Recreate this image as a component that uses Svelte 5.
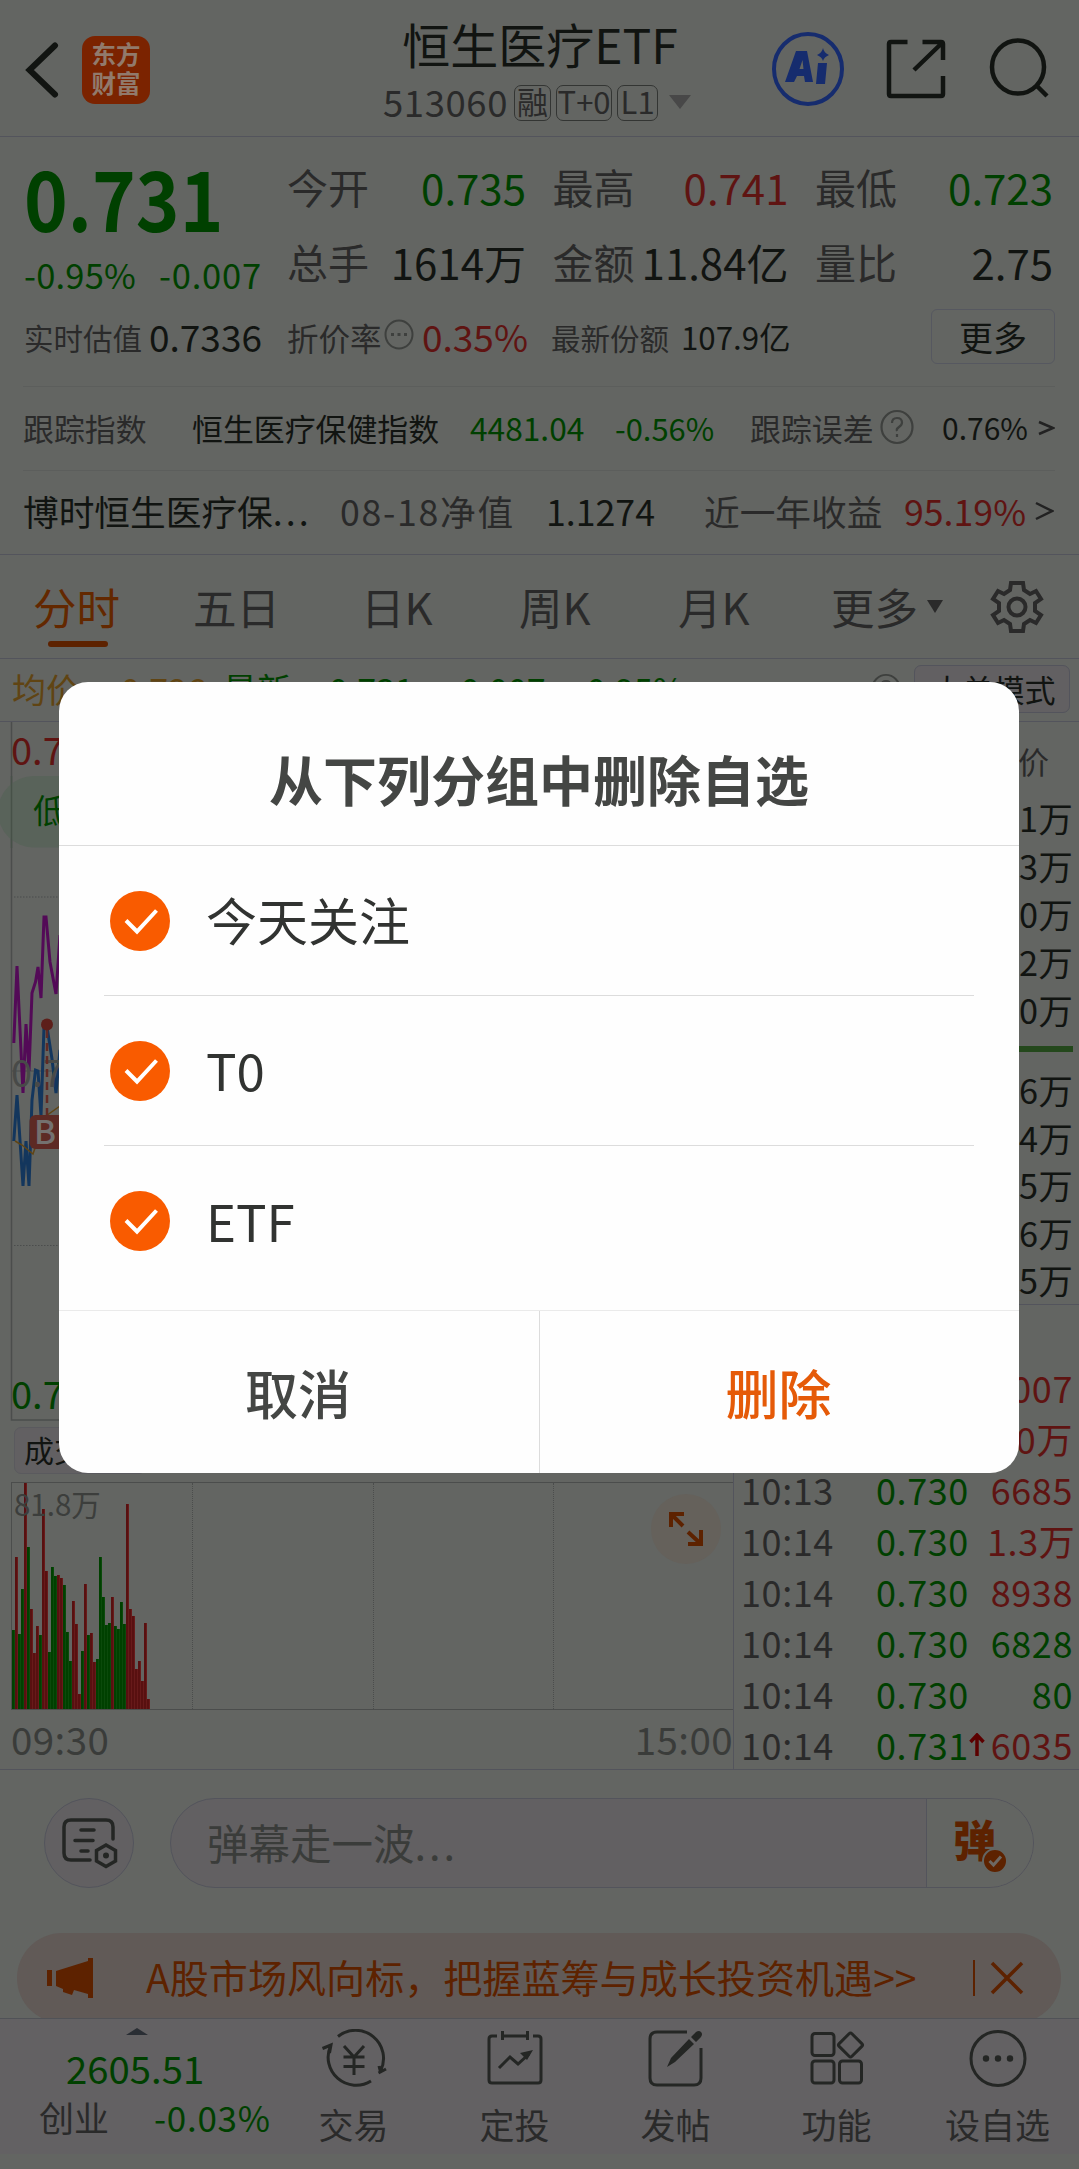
<script>
  const stats = [
    { label: "今开", value: "0.735", tone: "green" },
    { label: "最高", value: "0.741", tone: "red" },
    { label: "最低", value: "0.723", tone: "green" },
    { label: "总手", value: "1614万", tone: "dark" },
    { label: "金额", value: "11.84亿", tone: "dark" },
    { label: "量比", value: "2.75", tone: "dark" },
  ];

  // r / g = up or down minute, number = bar height in px
  const volume =
    "g79 r152 g75 g120 r226 g162 r100 r56 r83 g74 r200 r138 g57 g142 g133 r134 r131 g124 g77 g48 r108 r85 r15 g58 r125 g74 r76 r47 g50 g152 g112 g84 g86 r112 g83 g80 g107 g85 r205 r100 r93 r40 r48 r28 r86 r10"
      .split(" ")
      .map((v) => ({ up: v[0] === "r", h: Number(v.slice(1)) }));

  const asks = ["1万", "3万", "0万", "2万", "0万"];
  const bids = ["6万", "4万", "5万", "6万", "5万"];

  const trades = [
    { time: "", price: "", amount: "007", tone: "red" },
    { time: "", price: "", amount: "0万", tone: "red" },
    { time: "10:13", price: "0.730", amount: "6685", tone: "red" },
    { time: "10:14", price: "0.730", amount: "1.3万", tone: "red" },
    { time: "10:14", price: "0.730", amount: "8938", tone: "red" },
    { time: "10:14", price: "0.730", amount: "6828", tone: "green" },
    { time: "10:14", price: "0.730", amount: "80", tone: "green" },
    { time: "10:14", price: "0.731", amount: "6035", tone: "red", up: true },
  ];

  let groups = [
    { name: "今天关注", checked: true },
    { name: "T0", checked: true },
    { name: "ETF", checked: true },
  ];
</script>

<div class="page">
  <header>
    <div class="head-left">
      <svg class="back" width="34" height="60" viewBox="0 0 34 60">
        <path d="M30 5.500L4.500 30L30 54.500" />
      </svg>
      <div class="logo"><span>东方</span><span>财富</span></div>
    </div>
    <div class="head-title">
      <h1>恒生医疗ETF</h1>
      <div class="code">
        <span class="num">513060</span>
        <i style="width: 37px">融</i>
        <i style="width: 56px">T+0</i>
        <i style="width: 41px">L1</i>
        <svg width="22" height="14" viewBox="0 0 22 14"><path d="M0 0H22L11 14Z" fill="#484848" /></svg>
      </div>
    </div>
    <div class="head-icons">
      <svg width="74" height="76" viewBox="0 0 74 76">
        <ellipse cx="37" cy="38" rx="34" ry="35" fill="none" stroke="#162c6e" stroke-width="4" />
        <path
          d="M25 20H36L42 51H34L33 45H26L23 51H14ZM28.500 38H32.500L31.500 29Z"
          fill="#162c6e"
          fill-rule="evenodd"
        />
        <path d="M47 32H56L54 53H45ZM52 17Q53 22 58 24Q53 26 52 30Q51 26 46 24Q51 22 52 17Z" fill="#162c6e" />
      </svg>
      <svg width="60" height="60" viewBox="0 0 60 60" class="line">
        <path d="M21.500 3H5Q3 3 3 5V55Q3 57 5 57H55Q57 57 57 55V37M36.500 3H55Q57 3 57 5V21M56 4L28 31" />
      </svg>
      <svg width="62" height="62" viewBox="0 0 62 62" class="line">
        <ellipse cx="29" cy="29" rx="26" ry="26.500" />
        <path d="M48 48L58 58" />
      </svg>
    </div>
  </header>

  <section class="quote">
    <div class="last green">
      <strong>0.731</strong>
      <div><span>-0.95%</span><span>-0.007</span></div>
    </div>
    <div class="stats">
      {#each stats as s}
        <div><label>{s.label}</label><b class={s.tone}>{s.value}</b></div>
      {/each}
    </div>
  </section>

  <section class="extra">
    <label>实时估值</label>
    <b class="dark">0.7336</b>
    <label class="wide">折价率</label>
    <svg width="30" height="31" viewBox="0 0 30 31">
      <ellipse cx="15" cy="15.500" rx="13.500" ry="14" fill="none" stroke="#3e403e" stroke-width="2" />
      <path d="M7 15.500h3M13.500 15.500h3M20 15.500h3" stroke="#3e403e" stroke-width="3" />
    </svg>
    <b class="red">0.35%</b>
    <label>最新份额</label>
    <b class="dark small">107.9亿</b>
    <button>更多</button>
  </section>

  <section class="index">
    <label>跟踪指数</label>
    <span class="dark">恒生医疗保健指数</span>
    <span class="green n">4481.04</span>
    <span class="green">-0.56%</span>
    <label>跟踪误差</label>
    <svg width="34" height="36" viewBox="0 0 34 36" class="help">
      <ellipse cx="17" cy="18" rx="15.500" ry="16" />
      <path d="M12 14Q12 9 17 9T22 13.500Q22 16 19 18T17 22M17 25V28" />
    </svg>
    <span class="dark pct">0.76%</span>
    <svg width="17" height="16" viewBox="0 0 17 16" class="more"><path d="M1 2L15 8L1 14" /></svg>
  </section>

  <section class="fund">
    <span class="dark">博时恒生医疗保<em>...</em></span>
    <span class="gray date">08-18净值</span>
    <span class="dark">1.1274</span>
    <span class="gray">近一年收益</span>
    <span class="red">95.19%</span>
    <svg width="19" height="20" viewBox="0 0 19 20" class="more"><path d="M1 2L17 10L1 18" /></svg>
  </section>

  <nav class="tabs">
    <span class="active">分时</span>
    <span>五日</span>
    <span>日K</span>
    <span>周K</span>
    <span>月K</span>
    <span>更多</span>
    <svg width="16" height="13" viewBox="0 0 16 13"><path d="M0 0H16L8 13Z" fill="#2a2a2a" /></svg>
    <svg width="56" height="56" viewBox="-28 -28 56 56" class="gear">
      <path
        d="M-6 -24H6L7 -17L13 -13L19 -16L24 -8L18 -4V4L24 8L19 16L13 13L7 17L6 24H-6L-7 17L-13 13L-19 16L-24 8L-18 4V-4L-24 -8L-19 -16L-13 -13L-7 -17Z"
      />
      <circle r="8.500" />
    </svg>
  </nav>

  <section class="legend">
    <span class="gold">均价:</span>
    <span class="gold">0.726</span>
    <span class="green">最新:</span>
    <span class="green">0.731</span>
    <span class="green">-0.007</span>
    <span class="green">-0.95%</span>
    <svg width="30" height="32" viewBox="0 0 34 36" class="help">
      <ellipse cx="17" cy="18" rx="15.500" ry="16" />
      <path d="M12 14Q12 9 17 9T22 13.500Q22 16 19 18T17 22M17 25V28" />
    </svg>
    <button>大单模式</button>
  </section>

  <main>
    <div class="charts">
      <svg class="trend" width="733" height="699" viewBox="0 722 733 699">
        <path d="M11.500 722V1420H733" fill="none" stroke="#4b4d4c" stroke-width="1.500" />
        <path d="M14 897H733M14 1245.500H733" stroke="#4b4d4c" stroke-dasharray="1.500 1.500" />
        <path d="M12 1071H733" stroke="#4b4d4c" />
        <rect x="-2" y="776" width="130" height="71.500" rx="35.700" fill="#59635a" />
        <path d="M11.500 776V848" stroke="#475148" stroke-width="1.500" />
        <text x="33" y="823" font-size="33" fill="#004000">低估</text>
        <text x="11" y="765" font-size="38" fill="#5f1412">0.743</text>
        <path
          d="M13.800 1043L17 966L23 1093L26 1024L29 1071L32 993L35.500 982L38 967L41 998L44 917H46L50 962L56 994L60 935"
          class="plot"
          stroke="#530a57"
        />
        <path
          d="M13.800 1141L17 1095L23 1186L26 1141L29 1186L32 1100L35.500 1070L38 1071L41 1116L44 1027H47L52 1059L56 1093L60 1050"
          class="plot"
          stroke="#13365d"
        />
        <path d="M15 1141L22 1145L33 1154L46 1116L60 1106" fill="none" stroke="#604413" stroke-width="1.500" />
        <text x="11" y="1087" font-size="38" fill="#484a48">0.738</text>
        <path d="M47 1030V1116" stroke="#602a24" stroke-width="2.500" stroke-dasharray="8 5" />
        <circle cx="47" cy="1024.500" r="6" fill="#5d1f1a" />
        <rect x="29.500" y="1115" width="36" height="34" rx="6" fill="#5d2a24" />
        <text x="34" y="1144" font-size="33" font-weight="500" fill="#74716f">B</text>
        <text x="11" y="1409" font-size="38" fill="#004000">0.733</text>
      </svg>

      <button class="picker">成交量</button>

      <div class="volume">
        <div class="bars">
          {#each volume as v}
            <span class:up={v.up} style="height: {v.h}px"></span>
          {/each}
        </div>
        <span class="max">81.8万</span>
        <div class="cells"><i></i><i></i><i></i><i></i></div>
        <div class="expand">
          <svg width="34" height="34" viewBox="0 0 34 34">
            <path d="M2 15V2H15M2 2L14 14M19 32H32V18M32 32L19 20" />
          </svg>
        </div>
      </div>
      <div class="axis"><span>09:30</span><span>15:00</span></div>
    </div>

    <aside>
      <div class="book-head">均价</div>
      {#each asks as a}
        <div class="level">{a}</div>
      {/each}
      <div class="ratio"></div>
      {#each bids as b}
        <div class="level bid">{b}</div>
      {/each}
      <div class="trades">
        {#each trades as t}
          <div class="trade">
            <span class="gray">{t.time}</span>
            <span class="green">{t.price}</span>
            <span class="tick">
              {#if t.up}
                <svg width="16" height="24" viewBox="0 0 16 24"><path d="M8 23V3M1.500 9L8 2L14.500 9" /></svg>
              {/if}
            </span>
            <span class={t.tone}>{t.amount}</span>
          </div>
        {/each}
      </div>
    </aside>
  </main>

  <section class="comment">
    <div class="round">
      <svg width="56" height="52" viewBox="0 0 56 52">
        <path d="M51 21V9Q51 2 44 2H9Q2 2 2 9V35Q2 42 9 42H28" />
        <path d="M19 12H32M13 22.500H31M19 33H26" />
        <path d="M44 27L53.500 32.500V43L44 48.500L34.500 43V32.500Z" />
        <circle cx="44" cy="37.500" r="3" fill="#242624" stroke="none" />
      </svg>
    </div>
    <div class="field">
      <span>弹幕走一波<em>...</em></span>
      <div class="danmu">
        <b>弹</b>
        <svg width="26" height="26" viewBox="0 0 26 26">
          <circle cx="13" cy="13" r="12" fill="#5d2200" stroke="#636562" stroke-width="2" />
          <path d="M7.500 13L11.500 17L19 8.500" fill="none" stroke="#6d6863" stroke-width="3" />
        </svg>
      </div>
    </div>
  </section>

  <div class="notice-wrap">
    <div class="notice">
      <svg width="46" height="40" viewBox="0 0 46 40">
        <path d="M0 12H5V28H0ZM9 13L41 3V0H46V40H41V36L27 32L25 37L16 34V31L9 28Z" fill="#5d2200" />
      </svg>
      <span>A股市场风向标，把握蓝筹与成长投资机遇&gt;&gt;</span>
      <i></i>
      <svg width="34" height="34" viewBox="0 0 34 34">
        <path d="M2 2L32 32M32 2L2 32" stroke="#5d2200" stroke-width="3.500" />
      </svg>
    </div>
  </div>

  <footer>
    <div class="market">
      <svg width="22" height="7" viewBox="0 0 22 7"><path d="M0 7L11 0L22 7Z" fill="#2a2e34" /></svg>
      <strong class="green">2605.51</strong>
      <div><span>创业</span><span class="green">-0.03%</span></div>
    </div>
    <div class="item">
      <svg width="66" height="60" viewBox="0 0 66 60">
        <path d="M17 7.500A28 28 0 0 1 59.500 42M59.500 43L58 37M57.500 44L65 40M50 52A28 28 0 0 1 9.500 17M1.500 19.500L10 16L8.500 24" />
        <path d="M23 17L33 28L43 17M22.500 28H43.500M22.500 37.500H43.500M33 28V46" />
      </svg>
      <span>交易</span>
    </div>
    <div class="item">
      <svg width="66" height="60" viewBox="0 0 66 60">
        <path d="M15 7H10Q7 7 7 10V51Q7 54 10 54H56Q59 54 59 51V10Q59 7 56 7H51M21 7H45M20.500 2V11M45.500 2V11" />
        <path d="M17 39L28 28L36 35L47 25" />
        <path d="M38 24L51 21L45 31Z" fill="#242624" stroke="none" />
      </svg>
      <span>定投</span>
    </div>
    <div class="item">
      <svg width="66" height="60" viewBox="0 0 66 60">
        <path d="M44 3H14Q7 3 7 10V49Q7 56 14 56H51Q58 56 58 49V19" />
        <path d="M24 38L28 29L46 10L51 15L32 33ZM48 8L53 3Q56 1 58 3T58 8L53 13Z" fill="#242624" stroke="none" />
      </svg>
      <span>发帖</span>
    </div>
    <div class="item">
      <svg width="66" height="60" viewBox="0 0 66 60">
        <rect x="8" y="4.500" width="22" height="22" rx="3" />
        <rect x="8" y="32" width="22" height="22" rx="3" />
        <rect x="35.500" y="32" width="22" height="22" rx="3" />
        <rect x="37.500" y="7" width="18" height="18" rx="2" transform="rotate(45 46.500 16)" />
      </svg>
      <span>功能</span>
    </div>
    <div class="item">
      <svg width="66" height="60" viewBox="0 0 66 60">
        <ellipse cx="33" cy="29.500" rx="27" ry="27" />
        <g fill="#242624" stroke="none">
          <circle cx="21" cy="29.500" r="3.200" />
          <circle cx="33" cy="29.500" r="3.200" />
          <circle cx="45" cy="29.500" r="3.200" />
        </g>
      </svg>
      <span>设自选</span>
    </div>
  </footer>

  <div class="dialog">
    <h2>从下列分组中删除自选</h2>
    <ul>
      {#each groups as g}
        <li on:click={() => (g.checked = !g.checked)}>
          <svg width="60" height="60" viewBox="0 0 60 60">
            <circle cx="30" cy="30" r="30" fill={g.checked ? "#f95b00" : "#ccc"} />
            <path d="M16 29.500L27 40.500L46.500 19.500" fill="none" stroke="#fff" stroke-width="4" />
          </svg>
          <span>{g.name}</span>
        </li>
      {/each}
    </ul>
    <div class="actions">
      <button>取消</button>
      <button class="delete">删除</button>
    </div>
  </div>
</div>

<style>
  :global(body) {
    margin: 0;
    background: #636562;
  }
  .page {
    position: relative;
    width: 1079px;
    height: 2169px;
    overflow: hidden;
    background: #636562;
    color: #2a2a2a;
    font-family: "Noto Sans CJK SC", "Noto Sans", sans-serif;
    white-space: nowrap;
  }
  .page * {
    box-sizing: border-box;
  }
  svg {
    display: block;
    flex: none;
  }
  button {
    padding: 0;
    font-family: inherit;
    color: inherit;
    background: none;
    border: 0;
  }
  i,
  em {
    font-style: normal;
  }
  b {
    font-weight: 400;
  }
  .green {
    color: #004000;
  }
  .red {
    color: #5f1412;
  }
  .dark {
    color: #111411;
  }
  .gray {
    color: #2a2a2a;
  }
  .gold {
    color: #604413;
  }

  header {
    display: grid;
    grid-template-columns: 340px 400px 339px;
    height: 137px;
    border-bottom: 1px solid #53545c;
  }
  .head-left {
    display: flex;
    align-items: center;
    padding: 3px 0 0 25px;
  }
  .back {
    fill: none;
    stroke: #111411;
    stroke-width: 6;
    stroke-linecap: round;
  }
  .logo {
    display: flex;
    flex-direction: column;
    justify-content: center;
    align-items: center;
    width: 68px;
    height: 68px;
    margin-left: 23px;
    border-radius: 13px;
    background: #7b2300;
    color: #917a6c;
    font-size: 24.5px;
    line-height: 29px;
    font-weight: 700;
    padding-bottom: 3px;
  }
  .head-title {
    display: flex;
    flex-direction: column;
    align-items: center;
  }
  h1 {
    margin: 12px 0 0;
    height: 62px;
    line-height: 62px;
    font-size: 48px;
    font-weight: 400;
    color: #111411;
  }
  .code {
    display: flex;
    align-items: center;
    height: 56px;
    padding-bottom: 2px;
    margin-left: -6px;
    margin-top: 2px;
  }
  .code .num {
    font-size: 36.5px;
    letter-spacing: 0.6px;
    margin-right: 6px;
    line-height: 52px;
    padding-bottom: 3px;
  }
  .code i {
    height: 36px;
    margin-right: 5px;
    border: 1.500px solid #333533;
    border-radius: 7px;
    font-size: 31px;
    line-height: 30px;
    text-align: center;
  }
  .code svg {
    margin: 0 0 2px 6px;
  }
  .head-icons {
    display: flex;
    align-items: center;
    padding: 2px 0 0 31px;
  }
  .head-icons svg:nth-child(2) {
    margin-left: 41px;
  }
  .head-icons svg:nth-child(3) {
    margin-left: 43px;
  }
  .line {
    fill: none;
    stroke: #111411;
    stroke-width: 4.500;
  }

  .quote {
    display: flex;
    height: 162px;
    padding-left: 24px;
  }
  .last {
    width: 263px;
    padding-top: 6px;
  }
  .last strong {
    display: block;
    height: 106px;
    font-size: 83px;
    line-height: 106px;
    font-weight: 700;
    transform: scaleX(0.895);
    transform-origin: left;
  }
  .last div {
    display: flex;
    font-size: 34.5px;
    line-height: 50px;
  }
  .last div span:first-child {
    width: 135px;
    letter-spacing: 0.2px;
  }
  .last div span + span {
    letter-spacing: 0.8px;
  }
  .stats {
    display: grid;
    grid-template-columns: 239px 236px 238px;
    column-gap: 26.500px;
    grid-auto-rows: 75px;
    padding-top: 12px;
  }
  .stats div {
    display: flex;
    justify-content: space-between;
    font-size: 41px;
    line-height: 75px;
  }
  .stats b {
    font-size: 42px;
  }

  .extra {
    display: grid;
    grid-template-columns: 125px 138px 97px 38px 129px 130px 250px 124px;
    align-items: center;
    height: 75px;
    padding-left: 24px;
    font-size: 29.5px;
  }
  .extra .wide {
    font-size: 31.5px;
  }
  .extra b {
    font-size: 37px;
    line-height: 75px;
  }
  .extra b.small {
    font-size: 31.3px;
  }
  .extra svg {
    margin-bottom: 4px;
  }
  .extra button {
    height: 55px;
    border: 1.500px solid #565860;
    border-radius: 6px;
    font-size: 34px;
    line-height: 44px;
    color: #111411;
  }

  .index,
  .fund {
    display: grid;
    align-items: center;
    margin: 12px 24px 0 23px;
    border-top: 1px solid #5c5e5c;
    height: 84px;
    padding-bottom: 3px;
  }
  .index {
    grid-template-columns: 169px 278px 145px 135px 130px 62px 96px 17px;
    font-size: 30.9px;
  }
  .index .n {
    font-size: 31.7px;
  }
  .index .pct {
    font-size: 30px;
  }
  .fund {
    grid-template-columns: 317px 206px 158px 200px 131px 19px;
    margin-top: 0;
    padding-bottom: 5px;
    font-size: 35.7px;
  }
  .fund .date {
    letter-spacing: 1.7px;
  }
  em {
    letter-spacing: 3px;
  }
  .help {
    fill: none;
    stroke: #3e403e;
    stroke-width: 2.200;
  }
  .more {
    fill: none;
    stroke: #222;
    stroke-width: 2.500;
    margin-top: 2px;
  }

  .tabs {
    display: grid;
    grid-template-columns: 160px 168px 158px 159px 153px 96px 62px 56px;
    align-items: center;
    height: 105px;
    padding: 0 0 0 33px;
    border: 1px solid #53545c;
    border-width: 1px 0;
    font-size: 43.5px;
  }
  .tabs .active {
    position: relative;
    color: #632800;
  }
  .active::after {
    content: "";
    position: absolute;
    left: 15px;
    bottom: -9px;
    width: 60px;
    height: 6px;
    border-radius: 3px;
    background: #5d2200;
  }
  .gear {
    fill: none;
    stroke: #2a2a2a;
    stroke-width: 4;
  }

  .legend {
    display: grid;
    grid-template-columns: 109px 102px 106px 120px 126px 296px 43px 156px;
    align-items: center;
    height: 63px;
    padding: 0 0 3px 12px;
    border-bottom: 1px solid #53545c;
    font-size: 34px;
  }
  .legend button {
    height: 48px;
    border: 1.500px solid #53545c;
    border-radius: 7px;
    background: #626062;
    color: #111411;
    font-size: 31px;
    line-height: 40px;
    padding-left: 3px;
  }

  main {
    display: grid;
    grid-template-columns: 733px 346px;
    height: 1048px;
    border-bottom: 1px solid #53545c;
  }
  .trend text {
    font-family: inherit;
  }
  .plot {
    fill: none;
    stroke-width: 3;
  }
  .picker {
    display: block;
    width: 132px;
    height: 47px;
    margin: 6px 0 8px 14px;
    border: 1px solid #5a5a5e;
    border-radius: 7px;
    background: #626062;
    color: #111411;
    font-size: 30px;
    line-height: 38px;
    text-align: left;
    padding: 0 0 3px 9px;
  }
  .volume {
    position: relative;
    width: 722px;
    height: 228px;
    margin-left: 11px;
    border: 1px solid #4b4d4c;
    border-right: 0;
  }
  .bars {
    display: flex;
    align-items: flex-end;
    height: 226px;
  }
  .bars span {
    width: 3px;
    background: #004000;
    border-right: 1px solid #0b4a0b;
  }
  .bars .up {
    background: #581010;
    border-right-color: #681a1a;
  }
  .max {
    position: absolute;
    left: 2px;
    top: -1px;
    font-size: 29.5px;
    line-height: 42px;
    color: #3c3e3c;
  }
  .cells {
    position: absolute;
    inset: 0;
    display: grid;
    grid-template-columns: repeat(4, 1fr);
  }
  .cells i + i {
    border-left: 1px dotted #4b4d4c;
  }
  .expand {
    position: absolute;
    right: 12px;
    top: 11px;
    width: 70px;
    height: 70px;
    border-radius: 50%;
    background: #65615b;
    display: grid;
    place-items: center;
  }
  .expand path {
    fill: none;
    stroke: #5d2200;
    stroke-width: 4;
  }
  .axis {
    display: flex;
    justify-content: space-between;
    padding: 0 0 0 11px;
    color: #3a3c3a;
    font-size: 38.5px;
    letter-spacing: 0.4px;
    line-height: 56px;
  }

  aside {
    border-left: 1px solid #53545c;
  }
  .book-head {
    height: 73px;
    line-height: 78px;
    padding-right: 30px;
    text-align: right;
    font-size: 31px;
  }
  .level {
    height: 48px;
    line-height: 45px;
    padding-right: 6px;
    text-align: right;
    font-size: 34.3px;
    letter-spacing: 0.3px;
    color: #111411;
  }
  .ratio {
    width: 339px;
    height: 6px;
    margin: 11px 0 15px;
    background: #24481c;
  }
  .level.bid {
    height: 47.500px;
    line-height: 44px;
  }
  .trades {
    margin-top: -1px;
    border-top: 1px solid #53545c;
    padding-top: 57px;
  }
  .trade {
    display: grid;
    grid-template-columns: 135px 93px 18px 1fr;
    align-items: center;
    height: 51.100px;
    line-height: 51px;
    padding: 0 6px 0 7px;
    font-size: 36px;
    letter-spacing: 0.6px;
  }
  .trade > :last-child {
    text-align: right;
  }
  .tick path {
    fill: none;
    stroke: #5c0000;
    stroke-width: 3.500;
  }

  .comment {
    display: flex;
    padding: 28px 44px 0;
  }
  .round {
    display: grid;
    place-items: center;
    width: 90px;
    height: 90px;
    padding: 2px 0 0 2px;
    border: 1.500px solid #53545c;
    border-radius: 50%;
    background: #626062;
  }
  .round svg {
    fill: none;
    stroke: #242624;
    stroke-width: 3.500;
    stroke-linecap: round;
  }
  .field {
    display: flex;
    justify-content: space-between;
    width: 864px;
    height: 90px;
    margin-left: 36px;
    border: 1.500px solid #53545c;
    border-radius: 45px;
    overflow: hidden;
    background: #626062;
    color: #3a3c3a;
    font-size: 41.5px;
    line-height: 86px;
    padding-left: 36px;
  }
  .danmu {
    display: flex;
    width: 107px;
    border-left: 1.500px solid #53545c;
    background: #636562;
    padding-left: 26px;
    color: #5d2200;
    line-height: 78px;
  }
  .danmu b {
    font-weight: 900;
    font-size: 43px;
  }
  .danmu svg {
    margin: 49px 0 0 -14px;
  }

  .notice-wrap {
    height: 85px;
    margin-top: 45px;
    overflow: hidden;
  }
  .notice {
    display: flex;
    align-items: center;
    width: 1044px;
    height: 90px;
    margin-left: 17px;
    padding-left: 30px;
    border-radius: 45px;
    background: #615a57;
    color: #5d2200;
  }
  .notice span {
    width: 827px;
    margin-left: 53px;
    font-size: 39.1px;
    line-height: 84px;
    padding-bottom: 5px;
  }
  .notice i {
    width: 1.500px;
    height: 36px;
    margin-right: 15px;
    background: #5d2200;
  }

  footer {
    display: flex;
    height: 136px;
    border-top: 1px solid #505257;
    background: #636163;
  }
  .market {
    width: 273px;
    font-size: 35px;
  }
  .market svg {
    margin: 9px 0 0 126px;
  }
  .market strong {
    display: block;
    margin: 7px 0 0 66px;
    font-size: 38.3px;
    line-height: 52px;
    font-weight: 400;
  }
  .market div {
    display: flex;
    line-height: 46px;
    padding-left: 39px;
  }
  .market div span:first-child {
    width: 115px;
  }
  .market div .green {
    letter-spacing: 0.7px;
  }
  .item {
    display: flex;
    flex-direction: column;
    align-items: center;
    width: 161px;
    padding-top: 10px;
    font-size: 35px;
    line-height: 50px;
  }
  .item svg {
    margin-bottom: 10px;
    fill: none;
    stroke: #242624;
    stroke-width: 3;
  }

  /* sits above the dimmed quote page */
  .dialog {
    position: absolute;
    left: 59px;
    top: 682px;
    width: 960px;
    height: 791px;
    border-radius: 29px;
    overflow: hidden;
    background: #fefefe;
    color: #313331;
  }
  h2 {
    margin: 0;
    height: 164px;
    padding-top: 19px;
    border-bottom: 1px solid #dcdcdc;
    text-align: center;
    font-size: 54px;
    line-height: 156px;
    color: #444644;
  }
  ul {
    margin: 0;
    padding: 0 45px;
    height: 464px;
    list-style: none;
  }
  li {
    display: flex;
    align-items: center;
    height: 150px;
    padding-left: 6px;
    border-bottom: 1px solid #dcdcdc;
    font-size: 51px;
  }
  li:last-child {
    border: 0;
  }
  li span {
    margin-left: 36px;
    line-height: 140px;
    padding-bottom: 3px;
  }
  .actions {
    display: flex;
    border-top: 1px solid #eaeaea;
    height: 163px;
  }
  .actions button {
    width: 50%;
    font-size: 53px;
    font-weight: 500;
    line-height: 160px;
    color: #444644;
    padding-right: 2px;
  }
  .actions button + button {
    border-left: 1px solid #dcdcdc;
  }
  .actions .delete {
    color: #e55a08;
  }
</style>
